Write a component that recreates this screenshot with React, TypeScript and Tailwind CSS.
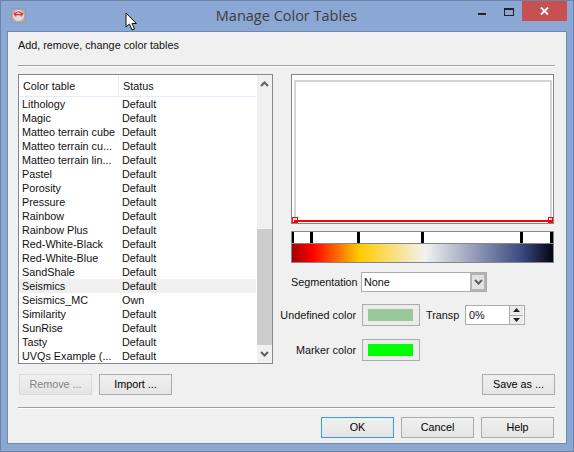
import React from "react";

const rows = [
  ["Lithology", "Default"],
  ["Magic", "Default"],
  ["Matteo terrain cube", "Default"],
  ["Matteo terrain cu...", "Default"],
  ["Matteo terrain lin...", "Default"],
  ["Pastel", "Default"],
  ["Porosity", "Default"],
  ["Pressure", "Default"],
  ["Rainbow", "Default"],
  ["Rainbow Plus", "Default"],
  ["Red-White-Black", "Default"],
  ["Red-White-Blue", "Default"],
  ["SandShale", "Default"],
  ["Seismics", "Default"],
  ["Seismics_MC", "Own"],
  ["Similarity", "Default"],
  ["SunRise", "Default"],
  ["Tasty", "Default"],
  ["UVQs Example (...", "Default"],
];

const Btn: React.FC<{ label: string; disabled?: boolean; focus?: boolean; className?: string }> = ({
  label,
  disabled,
  focus,
  className = "",
}) => (
  <div
    className={`w-[73px] h-[21px] pb-[1px] flex items-center justify-center border bg-gradient-to-b from-[#f0f0f0] to-[#e5e5e5] ${
      disabled
        ? "border-[#d9d9d9] text-[#838383]"
        : focus
        ? "border-[#3399ff] text-black"
        : "border-[#acacac] text-black"
    } ${className}`}
  >
    {label}
  </div>
);

const App: React.FC = () => {
  return (
    <div className="relative w-[574px] h-[452px] bg-[#8aa8d3] border border-[#6b83a8] flex flex-col font-['Liberation_Sans',sans-serif] text-[10.8px] leading-[14px] text-[#101010] overflow-hidden">
      {/* title bar */}
      <div className="h-[30px] flex shrink-0 pl-[10px]">
        <svg width="15" height="15" viewBox="0 0 16 16" className="mt-[7px]">
          <rect x="0.5" y="0.5" width="15" height="15" rx="2" fill="#a9a9ad" stroke="#9a9aa6" />
          <circle cx="8" cy="8" r="6" fill="#dcdcdc" />
          <path d="M3 6 L8 4 L13 6 M5 5 V9 M11 5 V9 M3 7 H13" stroke="#d9323a" strokeWidth="1.2" fill="none" />
        </svg>
        <div className="flex-1 text-center pt-[5px] pl-[69px] font-['Open_Sans',sans-serif] text-[14.5px] leading-[20px] text-[#3d3d3d]">
          Manage Color Tables
        </div>
        <div className="flex items-start">
          <div className="w-[8px] h-[2px] bg-[#222] mt-[12px] mr-[18px]" />
          <div className="w-[10px] h-[8px] border border-[#222] border-t-2 mt-[7px] mr-[8px]" />
          <div className="w-[45px] h-[20px] bg-[#c75050] flex items-center justify-center mr-[6px]">
            <svg width="9" height="8" viewBox="0 0 9 8">
              <path d="M1 0.5 L8 7.5 M8 0.5 L1 7.5" stroke="#fff" strokeWidth="1.8" />
            </svg>
          </div>
        </div>
      </div>

      {/* dialog body */}
      <div className="mx-[6px] mb-[7px] flex-1 bg-[#f0f0f0] border border-[#6f89ae] pt-[6px] pl-[10px] flex flex-col">
        <div className="h-[14px] leading-[14px]">Add, remove, change color tables</div>
        <div className="mt-[13px] h-[2px] w-[537px] bg-[#a0a0a0] border-b border-white" />

        <div className="mt-[7px] flex">
          {/* table */}
          <div className="w-[255px] h-[290px] border border-[#828790] bg-white flex">
            <div className="w-[238px] flex flex-col">
              <div className="h-[22px] flex shrink-0 border-b border-[#e3ecf8]">
                <div className="w-[100px] pl-[4px] flex items-center border-r border-[#e3ecf8]">Color table</div>
                <div className="pl-[4px] flex items-center">Status</div>
              </div>
              {rows.map(([name, status]) => (
                <div
                  key={name}
                  className={`h-[14px] flex shrink-0 ${name === "Seismics" ? "bg-[#f0f0f0]" : ""}`}
                >
                  <div className="w-[100px] pl-[3px] whitespace-nowrap">{name}</div>
                  <div className="pl-[3px]">{status}</div>
                </div>
              ))}
            </div>
            <div className="w-[15px] ml-[1px] bg-[#f0f0f0] flex flex-col items-center">
              <div className="h-[17px] flex items-center justify-center shrink-0">
                <svg width="9" height="6" viewBox="0 0 9 6">
                  <path d="M1 5 L4.5 1.5 L8 5" stroke="#606060" strokeWidth="2" fill="none" />
                </svg>
              </div>
              <div className="h-[137px] shrink-0" />
              <div className="w-full h-[116px] shrink-0 bg-[#cdcdcd]" />
              <div className="h-[17px] flex items-center justify-center shrink-0">
                <svg width="9" height="6" viewBox="0 0 9 6">
                  <path d="M1 1 L4.5 4.5 L8 1" stroke="#606060" strokeWidth="2" fill="none" />
                </svg>
              </div>
            </div>
          </div>

          {/* right side */}
          <div className="ml-[18px] w-[264px] flex flex-col">
            {/* canvas */}
            <div className="relative w-[263px] h-[150px] border border-[#828790] bg-white pt-[5px] pl-[2px] pr-[1px]">
              <div className="h-[143px] border-x-2 border-t-2 border-[#d4d4d4] flex flex-col justify-end">
                <div className="h-[2px] bg-[#ff0000] mb-[1px] -mx-[2px]" />
              </div>
              {/* end markers */}
              <div className="absolute left-[0px] bottom-[0px] w-[6px] h-[6px] border border-[#ff0000]" />
              <div className="absolute right-[0px] bottom-[0px] w-[5px] h-[6px] border border-[#ff0000]" />
            </div>

            {/* colour bar */}
            <div className="mt-[7px] w-[263px] h-[32px] border border-[#828790] bg-white flex flex-col">
              <div className="h-[11px] flex shrink-0">
                <div className="w-[2px] h-full bg-black" />
                <div className="w-[3px] h-full bg-black ml-[16px]" />
                <div className="w-[3px] h-full bg-black ml-[44px]" />
                <div className="w-[3px] h-full bg-black ml-[61px]" />
                <div className="w-[3px] h-full bg-black ml-[96px]" />
                <div className="w-[3px] h-full bg-black ml-[27px]" />
              </div>
              <div className="flex-1 border-t border-[#828790] bg-[linear-gradient(to_right,#a50000_0%,#ff0000_8%,#ffcc00_26%,#f2f2f2_51%,#3a4a80_88%,#050510_100%)]" />
            </div>

            {/* segmentation */}
            <div className="mt-[9px] flex items-center h-[20px]">
              <div className="w-[65px] text-right">Segmentation</div>
              <div className="ml-[5px] w-[126px] h-[20px] border border-[#acacac] bg-white flex justify-between">
                <span className="pl-[2px] leading-[18px]">None</span>
                <div className="w-[16px] bg-[#e3e3e3] border-2 border-[#b4b4b4] flex items-center justify-center">
                  <svg width="9" height="6" viewBox="0 0 9 6">
                    <path d="M1 1 L4.5 4.5 L8 1" stroke="#606060" strokeWidth="2" fill="none" />
                  </svg>
                </div>
              </div>
            </div>

            {/* undefined colour */}
            <div className="mt-[12px] flex items-center h-[22px] -ml-[11px]">
              <div className="w-[76px] text-right whitespace-nowrap">Undefined color</div>
              <div className="ml-[6px] w-[58px] h-[22px] pl-[5px] border border-[#acacac] bg-[#ececec] flex items-center">
                <div className="w-[45px] h-[12px] bg-[#9bc89b]" />
              </div>
              <div className="ml-[6px] w-[34px]">Transp</div>
              <div className="ml-[5px] w-[60px] h-[20px] border border-[#acacac] bg-white flex justify-between">
                <span className="pl-[3px] leading-[18px]">0%</span>
                <div className="w-[14px] flex flex-col border-l border-[#acacac] bg-[#ececec] mr-[1px]">
                  <div className="flex-1 flex items-center justify-center border-b border-[#acacac]">
                    <svg width="7" height="4" viewBox="0 0 7 4"><path d="M3.5 0 L7 4 H0 Z" fill="#222" /></svg>
                  </div>
                  <div className="flex-1 flex items-center justify-center">
                    <svg width="7" height="4" viewBox="0 0 7 4"><path d="M0 0 H7 L3.5 4 Z" fill="#222" /></svg>
                  </div>
                </div>
              </div>
            </div>

            {/* marker colour */}
            <div className="mt-[13px] flex items-center h-[22px] -ml-[11px]">
              <div className="w-[76px] text-right whitespace-nowrap">Marker color</div>
              <div className="ml-[6px] w-[58px] h-[22px] pl-[5px] border border-[#acacac] bg-[#ececec] flex items-center">
                <div className="w-[45px] h-[12px] bg-[#00ff00]" />
              </div>
            </div>
          </div>
        </div>

        {/* left and right action buttons */}
        <div className="mt-[10px] w-[537px] flex pl-[1px]">
          <Btn label="Remove ..." disabled />
          <Btn label="Import ..." className="ml-[7px]" />
          <Btn label="Save as ..." className="ml-auto" />
        </div>

        <div className="mt-[12px] h-[2px] w-[537px] bg-[#a0a0a0] border-b border-white" />

        <div className="mt-[8px] w-[536px] flex justify-end gap-[7px]">
          <Btn label="OK" focus />
          <Btn label="Cancel" />
          <Btn label="Help" />
        </div>
      </div>

      {/* mouse pointer */}
      <svg width="14" height="20" viewBox="0 0 14 20" className="absolute left-[124px] top-[11px]">
        <path d="M1 1 V15 L4.5 12 L7 18 L9.5 17 L7 11.5 H11.5 Z" fill="#fff" stroke="#111" strokeWidth="1" />
      </svg>
    </div>
  );
};

export default App;
